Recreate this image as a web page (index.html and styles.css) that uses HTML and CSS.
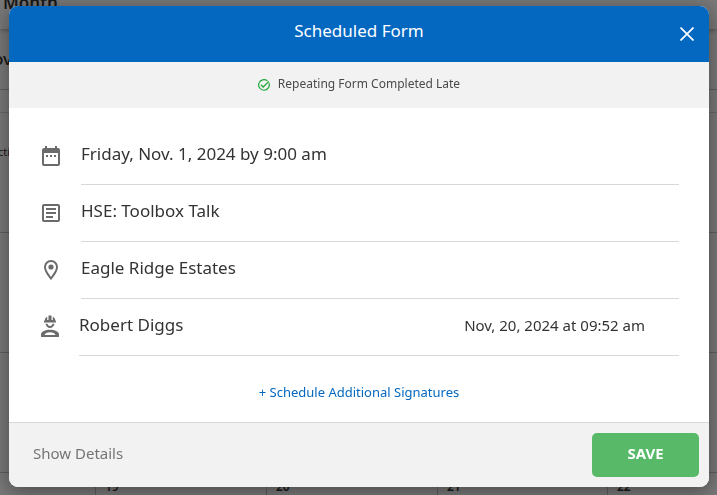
FILE: index.html
```html
<!DOCTYPE html>
<html lang="en">
<head>
    <meta charset="UTF-8">
    <meta name="viewport" content="width=device-width, initial-scale=1.0">
    <title>Scheduled Form</title>
    <link rel="stylesheet" href="styles.css">
</head>
<body>
    <!-- Calendar page behind the modal -->
    <div class="page">
        <div class="toolbar">Month</div>
        <div class="month-title">ov</div>
        <div class="weekdays"></div>
        <div class="calendar">
            <div class="day"><span class="event">cti</span></div>
            <div class="day"></div>
            <div class="day"></div>
            <div class="day"></div>
            <div class="day"></div>
            <div class="day"></div>
            <div class="day"></div>
            <div class="day"></div>
            <div class="day"></div>
            <div class="day"></div>
            <div class="day"></div>
            <div class="day"></div>
            <div class="day"></div>
            <div class="day"></div>
            <div class="day"></div>
            <div class="day"></div>
            <div class="day">19</div>
            <div class="day">20</div>
            <div class="day">21</div>
            <div class="day">22</div>
        </div>
    </div>

    <div class="overlay">
        <div class="modal" role="dialog" aria-labelledby="modalTitle">
            <div class="modal-header">
                <h1 id="modalTitle">Scheduled Form</h1>
                <button class="close-btn" aria-label="Close">
                    <svg width="14" height="14" viewBox="0 0 14 14"><path d="M.5.5l13 13M13.500.5L.5 13.500" stroke="currentColor" stroke-width="1.700" fill="none"/></svg>
                </button>
            </div>

            <div class="status">
                <svg width="12" height="12" viewBox="0 0 12 12" fill="none" stroke="currentColor"><path d="M10.900 4a5.300 5.300 0 1 1-1.500-2.100" stroke-width="1.200"/><path d="M3 5.800l2.200 2.200L10.800 2.400" stroke-width="1.300"/></svg>
                <span>Repeating Form Completed Late</span>
            </div>

            <div class="modal-body">
                <div class="row">
                    <svg class="icon" viewBox="0 0 24 24"><path fill-rule="evenodd" d="M5 4h1V2h2v2h8V2h2v2h1a2 2 0 0 1 2 2v14a2 2 0 0 1-2 2H5a2 2 0 0 1-2-2V6a2 2 0 0 1 2-2zm0 5v11h14V9zM7 11h2v2H7zm4 0h2v2h-2zm4 0h2v2h-2z"/></svg>
                    <div class="row-content">Friday, Nov. 1, 2024 by 9:00 am</div>
                </div>
                <div class="row">
                    <svg class="icon" viewBox="0 0 24 24"><path fill-rule="evenodd" d="M5 3h14a2 2 0 0 1 2 2v14a2 2 0 0 1-2 2H5a2 2 0 0 1-2-2V5a2 2 0 0 1 2-2zm0 2v14h14V5zM7 7h10v2H7zm0 4h10v2H7zm0 4h7v2H7z"/></svg>
                    <div class="row-content">HSE: Toolbox Talk</div>
                </div>
                <div class="row">
                    <svg class="icon" viewBox="0 0 24 24"><path fill-rule="evenodd" d="M12 2a7 7 0 0 0-7 7c0 5.200 7 13 7 13s7-7.800 7-13a7 7 0 0 0-7-7zm0 2a5 5 0 0 0-5 5c0 2.900 2.900 7.200 5 9.900 2.100-2.700 5-7 5-9.900a5 5 0 0 0-5-5z"/><circle cx="12" cy="9" r="2.600"/></svg>
                    <div class="row-content">Eagle Ridge Estates</div>
                </div>
                <div class="row">
                    <svg class="icon signer-icon" viewBox="1 0 22 24"><path d="M6.500 6v-.5a5.500 5.500 0 0 1 2.700-3.900V5h1.300V.5h3V5h1.300V1.600a5.500 5.500 0 0 1 2.700 3.900V6h.5v1.500H6V6z"/><path d="M7.500 8.800h2c.4 1.500 1.400 2.200 2.500 2.200s2.100-.7 2.500-2.200h2c-.5 2.700-2.300 4.200-4.500 4.200s-4-1.500-4.500-4.200z"/><path fill-rule="evenodd" d="M3 22v-2.500c0-3 4.500-4.700 9-4.700s9 1.700 9 4.700V22zm3.500-2h11c-.6-1.800-2.700-2.700-5.500-2.700s-4.900.9-5.500 2.700z"/></svg>
                    <div class="row-content">
                        <span>Robert Diggs</span>
                        <span class="signed-at">Nov, 20, 2024 at 09:52 am</span>
                    </div>
                </div>
                <a class="add-link" href="#">+ Schedule Additional Signatures</a>
            </div>

            <div class="modal-footer">
                <a class="details-link" href="#">Show Details</a>
                <button class="save-btn">SAVE</button>
            </div>
        </div>
    </div>
</body>
</html>
```
FILE: styles.css
```css
* {
    box-sizing: border-box;
}
body {
    margin: 0;
    height: 100vh;
    overflow: hidden;
    background: #f0f0f0;
    font-family: "Noto Sans", sans-serif;
    color: #333;
}
.page {
    height: 100vh;
    overflow: hidden;
}
.toolbar {
    height: 29px;
    padding-left: 3px;
    line-height: 6px;
    font-size: 17px;
    font-weight: 600;
    box-shadow: 0 1px 5px rgba(0,0,0,0.35);
}
.month-title {
    height: 60px;
    line-height: 60px;
    margin-left: -7px;
    font-size: 17px;
    font-weight: 500;
}
.weekdays {
    height: 24px;
    border-top: 1px solid #bbb;
    border-bottom: 1px solid #ccc;
}
.calendar {
    display: grid;
    grid-template-columns: 96fr 171fr 171fr 170fr 109fr;
    grid-auto-rows: 120px;
}
.day {
    padding: 5px 9px;
    border-right: 1px solid #bbb;
    border-bottom: 1px solid #bbb;
    font-size: 12px;
    font-weight: 600;
}
.day:nth-child(5n) {
    border-right: none;
}
.event {
    display: block;
    margin: 26px 0 0 -11px;
    font-size: 11px;
    font-weight: 400;
}
.overlay {
    position: fixed;
    inset: 0;
    padding: 6px 8px 8px 9px;
    background: rgba(0,0,0,0.5);
}
.modal {
    background: #fff;
    border-radius: 9px;
    overflow: hidden;
    box-shadow: 0 4px 20px rgba(0,0,0,0.4);
}
.modal-header {
    position: relative;
    padding: 12px 50px 18px;
    background: #0468c1;
    color: #fff;
    text-align: center;
}
h1 {
    margin: 0;
    font-size: 17px;
    line-height: 26px;
    font-weight: 400;
}
.close-btn {
    position: absolute;
    top: 16px;
    right: 10px;
    width: 24px;
    height: 24px;
    padding: 5px;
    border: none;
    background: none;
    color: #fff;
    cursor: pointer;
}
.close-btn svg {
    display: block;
}
.status {
    display: flex;
    align-items: center;
    justify-content: center;
    gap: 8px;
    height: 46px;
    background: #f2f2f2;
    font-size: 12px;
    line-height: 18px;
    color: #4a4a4a;
}
.status svg {
    color: #1fa838;
}
.status span {
    margin-bottom: 2px;
}
.modal-body {
    padding: 20px 30px 0;
}
.row {
    display: flex;
    align-items: center;
    gap: 18px;
}
.icon {
    flex: none;
    width: 24px;
    height: 24px;
    margin-bottom: 2px;
    fill: #6b6b6b;
}
.signer-icon {
    width: 22px;
}
.row-content {
    flex: 1;
    display: flex;
    align-items: center;
    justify-content: space-between;
    padding: 14px 0 18px;
    border-bottom: 1px solid #d8d8d8;
    font-size: 17px;
    line-height: 24px;
}
.signed-at {
    margin-right: 34px;
    font-size: 15px;
}
.add-link {
    display: block;
    padding: 26px 0 20px;
    font-size: 13px;
    line-height: 20px;
    color: #0468c1;
    text-align: center;
    text-decoration: none;
}
.modal-footer {
    display: flex;
    align-items: center;
    justify-content: space-between;
    padding: 10px 10px 10px 24px;
    border-top: 1px solid #d8d8d8;
    background: #f2f2f2;
}
.details-link {
    margin-bottom: 4px;
    font-size: 15px;
    color: #757575;
    text-decoration: none;
}
.save-btn {
    width: 107px;
    height: 44px;
    padding: 0 0 4px;
    border: none;
    border-radius: 5px;
    background: #58b968;
    color: #fff;
    font-family: inherit;
    font-size: 15px;
    font-weight: 700;
    cursor: pointer;
}
```
